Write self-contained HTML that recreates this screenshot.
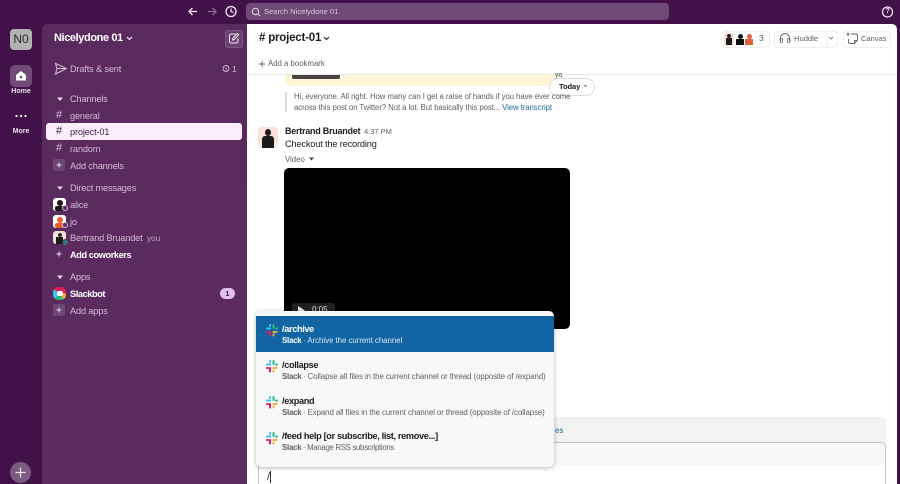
<!DOCTYPE html>
<html><head><meta charset="utf-8"><style>
html,body{margin:0;padding:0;width:900px;height:484px;overflow:hidden}
body{background:#43114a;font-family:"Liberation Sans",sans-serif}
#r{position:absolute;left:0;top:0;width:900px;height:484px;overflow:hidden;background:#43114a}
.a{position:absolute;white-space:nowrap}
.s{color:#d3bcd6;font-size:9.2px;letter-spacing:-.15px;left:70px;line-height:14px}
.b{font-weight:bold;letter-spacing:-.4px;color:#fff}
.h{color:#d3bcd6;font-size:11px;left:56px;line-height:14px}
.t{font-size:9.2px;letter-spacing:-.35px;font-weight:bold;color:#1d1c1d;left:282px;line-height:14px}
.d{font-size:7.8px;color:#616061;left:282px;line-height:12px}
.d b{display:inline-block;width:21px;letter-spacing:-.2px}
svg{position:absolute;overflow:visible}
</style></head><body><div id="r">
<div class="a" style="left:42px;top:24px;width:205px;height:460px;background:linear-gradient(180deg,#5a2a5f,#5c2b5f);border-top-left-radius:5px"></div>
<div class="a" style="left:247px;top:24px;width:650px;height:460px;background:#fff;border-top-right-radius:5px"></div>

<!-- top bar -->
<svg style="left:0;top:0" width="900" height="24" fill="none">
<path d="M197 11.5H189M192.500 8L189 11.500L192.500 15" stroke="#f3eaf4" stroke-width="1.300"/>
<path d="M208 11.500H216M212.500 8L216 11.500L212.500 15" stroke="#8d6b91" stroke-width="1.300"/>
<circle cx="231" cy="11.500" r="5" stroke="#f3eaf4" stroke-width="1.300"/><path d="M231 8.500V11.500L233.500 12.500" stroke="#f3eaf4" stroke-width="1.200"/>
<circle cx="887.500" cy="12" r="5" stroke="#f3eaf4" stroke-width="1.200"/>
</svg>
<div class="a" style="left:246px;top:3px;width:423px;height:17px;background:#6f4a76;border-radius:4px"></div>
<svg style="left:0;top:0" width="300" height="24" fill="none"><circle cx="255.500" cy="11.500" r="3.200" stroke="#e7dbe8"/><path d="M258 14L260 16" stroke="#e7dbe8"/></svg>
<div class="a" style="left:264px;top:5px;font-size:7.600px;line-height:14px;color:#d9c9dc">Search Nicelydone 01</div>
<div class="a" style="left:885.500px;top:6px;font-size:7px;line-height:12px;color:#f3eaf4;font-weight:bold">?</div>

<!-- left rail -->
<div class="a" style="left:10px;top:29px;width:22px;height:21px;background:#b3b1b3;border-radius:4px;color:#2b2a2b;font-size:12px;line-height:21px;text-align:center">N0</div>
<div class="a" style="left:10px;top:65px;width:22px;height:22px;background:#714a78;border-radius:5px"></div>
<svg style="left:10px;top:65px" width="22" height="22"><path d="M11 6L16 10V15.500H6V10Z" fill="#fff"/><circle cx="11" cy="12" r="1.300" fill="#714a78"/></svg>
<div class="a" style="left:0;width:42px;text-align:center;top:86px;font-size:7px;line-height:12px;font-weight:bold;color:#e9dfea">Home</div>
<svg style="left:10px;top:105px" width="22" height="22"><circle cx="6.500" cy="11" r="1.100" fill="#fff"/><circle cx="11" cy="11" r="1.100" fill="#fff"/><circle cx="15.500" cy="11" r="1.100" fill="#fff"/></svg>
<div class="a" style="left:0;width:42px;text-align:center;top:126px;font-size:7px;line-height:12px;font-weight:bold;color:#e9dfea">More</div>
<div class="a" style="left:10px;top:462px;width:21px;height:21px;background:#7b5b81;border-radius:50%"></div>
<svg style="left:10px;top:462px" width="21" height="21"><path d="M10.500 5.500V15.500M5.500 10.500H15.500" stroke="#eadfeb" stroke-width="1.200"/></svg>

<!-- sidebar -->
<div class="a" style="left:54px;top:30px;font-size:11px;letter-spacing:-.4px;line-height:17px;font-weight:bold;color:#fff">Nicelydone 01</div>
<svg style="left:126px;top:36px" width="8" height="6" fill="none"><path d="M1 1L3.500 3.500L6 1" stroke="#fff" stroke-width="1"/></svg>
<div class="a" style="left:225px;top:30px;width:16px;height:16px;background:#6b4170;border-radius:3px;border:.5px solid #7c5682"></div>
<svg style="left:225px;top:30px" width="17" height="17" fill="none"><path d="M11 4H6.500Q4.500 4 4.500 6V11Q4.500 13 6.500 13H11Q13 13 13 11V8M7.500 10L8 8L12.500 3.500L13.800 4.800L9.300 9.500Z" stroke="#efe5f0" stroke-width="1"/></svg>

<svg style="left:54px;top:62px" width="14" height="14" fill="none"><path d="M1.500 1.500L12.500 6.500L1.500 12L3 6.500ZM3 6.500H12.500" stroke="#d3bcd6" stroke-width="1"/></svg>
<div class="a s" style="top:62px">Drafts &amp; sent</div>
<svg style="left:222px;top:64px" width="8" height="9" fill="none"><circle cx="4" cy="4.500" r="3" stroke="#d3bcd6" stroke-width=".9"/><path d="M4 3V5L5 5.500" stroke="#d3bcd6" stroke-width=".8"/></svg>
<div class="a" style="left:232px;top:62px;font-size:8.500px;line-height:14px;color:#d3bcd6">1</div>

<svg style="left:57px;top:97px" width="8" height="5"><path d="M0 .5H6L3 4Z" fill="#e7dbe8"/></svg>
<div class="a s" style="top:92px">Channels</div>
<div class="a h" style="top:108px">#</div><div class="a s" style="top:109px">general</div>
<div class="a" style="left:46px;top:123px;width:196px;height:17px;background:#f9edfa;border-radius:3px"></div>
<div class="a h" style="top:124px;color:#3d1d42">#</div><div class="a s" style="top:125px;color:#3d1d42">project-01</div>
<div class="a h" style="top:141px">#</div><div class="a s" style="top:142px">random</div>
<div class="a" style="left:53px;top:159px;width:12px;height:12px;background:#6e4674;border-radius:2px"></div>
<svg style="left:53px;top:159px" width="12" height="12"><path d="M6 3.500V8.500M3.500 6H8.500" stroke="#e7dbe8"/></svg>
<div class="a s" style="top:159px">Add channels</div>

<svg style="left:57px;top:186px" width="8" height="5"><path d="M0 .5H6L3 4Z" fill="#e7dbe8"/></svg>
<div class="a s" style="top:181px">Direct messages</div>
<!-- alice -->
<div class="a" style="left:53px;top:198px;width:13px;height:12.500px;background:#fff;border-radius:3px;overflow:hidden"><div class="a" style="left:3.500px;top:1.500px;width:6px;height:6px;border-radius:50%;background:#1a1a1a"></div><div class="a" style="left:1.500px;top:7.500px;width:10px;height:5px;background:#1a1a1a;border-radius:2px"></div></div>
<div class="a" style="left:62px;top:205px;width:4px;height:4px;border-radius:50%;border:1px solid #d3bcd6;background:#5a2a5f"></div>
<div class="a s" style="top:198px">alice</div>
<!-- jo -->
<div class="a" style="left:53px;top:215px;width:13px;height:12.500px;background:#fff;border-radius:3px;overflow:hidden"><div class="a" style="left:3.500px;top:1.500px;width:6px;height:6px;border-radius:50%;background:#e8602c"></div><div class="a" style="left:1.500px;top:7.500px;width:10px;height:5px;background:#e8602c;border-radius:2px"></div></div>
<div class="a" style="left:62px;top:222px;width:4px;height:4px;border-radius:50%;border:1px solid #d3bcd6;background:#5a2a5f"></div>
<div class="a s" style="top:215px">jo</div>
<!-- bertrand -->
<div class="a" style="left:53px;top:231px;width:13px;height:13px;background:#f3e2da;border-radius:3px;overflow:hidden"><div class="a" style="left:4.500px;top:1.500px;width:4px;height:4px;border-radius:50%;background:#3a2a24"></div><div class="a" style="left:3px;top:5.500px;width:7px;height:8px;background:#1d1c1d"></div></div>
<div class="a" style="left:61.500px;top:238.500px;width:5px;height:5px;border-radius:50%;background:#2d7a78;border:.5px solid #5a2a5f"></div>
<div class="a s" style="top:231px">Bertrand Bruandet <span style="margin-left:2px;font-size:8.500px;color:#b79fbb">you</span></div>
<svg style="left:53px;top:248px" width="12" height="12"><path d="M6 3.500V8.500M3.500 6H8.500" stroke="#f0d8f2"/></svg>
<div class="a s b" style="top:248px;color:#fff">Add coworkers</div>

<svg style="left:57px;top:275px" width="8" height="5"><path d="M0 .5H6L3 4Z" fill="#e7dbe8"/></svg>
<div class="a s" style="top:270px">Apps</div>
<div class="a" style="left:53px;top:287px;width:13px;height:13px;border-radius:5px;background:conic-gradient(#e01e5a 0 25%,#ecb22e 25% 40%,#2eb67d 40% 62%,#36c5f0 62% 85%,#e01e5a 85%)"></div>
<div class="a" style="left:56.500px;top:291px;width:6px;height:5px;background:#fff;border-radius:2px"></div>
<div class="a s b" style="top:287px;color:#fff">Slackbot</div>
<div class="a" style="left:220px;top:288px;width:15px;height:11px;border-radius:6px;background:#e3bff0;color:#3f1a44;font-size:7.500px;font-weight:bold;line-height:11px;text-align:center">1</div>
<div class="a" style="left:53px;top:304px;width:12px;height:12px;background:#6e4674;border-radius:2px"></div>
<svg style="left:53px;top:304px" width="12" height="12"><path d="M6 3.500V8.500M3.500 6H8.500" stroke="#e7dbe8"/></svg>
<div class="a s" style="top:304px">Add apps</div>

<!-- channel header -->
<div class="a" style="left:259px;top:30px;font-size:11.500px;letter-spacing:-.2px;line-height:17px;font-weight:bold;color:#1d1c1d"># project-01</div>
<svg style="left:323px;top:36px" width="8" height="6" fill="none"><path d="M1 1L3.500 3.500L6 1" stroke="#1d1c1d"/></svg>
<div class="a" style="left:721px;top:31px;width:47px;height:15px;border:1px solid #f0eff0;border-radius:4px"></div>
<div class="a" style="left:724px;top:33px;width:10px;height:12px;background:#f3dfd4;border-radius:2px;overflow:hidden"><div class="a" style="left:3px;top:1px;width:4px;height:4px;border-radius:50%;background:#2a1e1a"></div><div class="a" style="left:2px;top:5px;width:6px;height:7px;background:#1d1c1d"></div></div>
<div class="a" style="left:735px;top:33px;width:10px;height:12px;overflow:hidden"><div class="a" style="left:2.500px;top:1px;width:5px;height:5px;border-radius:50%;background:#111"></div><div class="a" style="left:1px;top:6px;width:8px;height:6px;background:#111"></div></div>
<div class="a" style="left:744px;top:33px;width:10px;height:12px;overflow:hidden"><div class="a" style="left:2.500px;top:1px;width:5px;height:5px;border-radius:50%;background:#e2603a"></div><div class="a" style="left:1px;top:6px;width:8px;height:6px;background:#e2603a"></div></div>
<div class="a" style="left:759px;top:32px;font-size:8.500px;line-height:13px;color:#616061">3</div>
<div class="a" style="left:774px;top:31px;width:51px;height:15px;border:1px solid #f0eff0;border-radius:4px 0 0 4px"></div>
<div class="a" style="left:825px;top:31px;width:12px;height:15px;border:1px solid #f0eff0;border-left:0;border-radius:0 4px 4px 0"></div>
<svg style="left:779px;top:32px" width="12" height="12" fill="none"><path d="M1.500 9V6A4.500 4.500 0 0 1 10.500 6V9" stroke="#616061"/><rect x="1" y="6.500" width="2.500" height="4" rx="1" stroke="#616061" stroke-width=".8"/><rect x="8.500" y="6.500" width="2.500" height="4" rx="1" stroke="#616061" stroke-width=".8"/></svg>
<div class="a" style="left:794px;top:32px;font-size:7.600px;line-height:13px;color:#616061">Huddle</div>
<svg style="left:828px;top:36px" width="7" height="5" fill="none"><path d="M1 1L3 3L5 1" stroke="#616061" stroke-width=".8"/></svg>
<div class="a" style="left:843px;top:31px;width:46px;height:15px;border:1px solid #f0eff0;border-radius:4px"></div>
<svg style="left:846px;top:31px" width="13" height="14" fill="none"><path d="M5 3H10Q11.500 3 11.500 4.500V9L8.500 12.500H4Q2.500 12.500 2.500 11V8M8.500 12.500V9.500H11.500M2 1.500V5M.5 3.200H3.800" stroke="#616061" stroke-width=".9"/></svg>
<div class="a" style="left:861px;top:32px;font-size:7.500px;line-height:13px;color:#616061">Canvas</div>

<svg style="left:258px;top:60px" width="8" height="8"><path d="M4 1V7M1 4H7" stroke="#616061" stroke-width=".9"/></svg>
<div class="a" style="left:268px;top:57px;font-size:7.800px;line-height:13px;color:#616061">Add a bookmark</div>
<div class="a" style="left:247px;top:74px;width:650px;height:1px;background:#e9e8e9"></div>

<!-- messages -->
<div class="a" style="left:285px;top:75px;width:270px;height:11px;background:#fdf5d7;border-radius:0 0 5px 5px"></div>
<div class="a" style="left:292px;top:75px;width:48px;height:4px;background:#4a4542;border-radius:0 0 2px 2px"></div>
<div class="a" style="left:555px;top:71px;font-size:7px;line-height:9px;color:#444">yo</div>
<div class="a" style="left:549px;top:78px;width:44px;height:16px;background:#fff;border:1px solid #dddcdd;border-radius:9px"></div>
<div class="a" style="left:559px;top:80px;font-size:7.600px;letter-spacing:-.1px;line-height:13px;font-weight:bold;color:#1d1c1d">Today</div>
<svg style="left:583px;top:84px" width="6" height="5" fill="none"><path d="M1 1L2.500 2.500L4 1" stroke="#616061" stroke-width=".8"/></svg>
<div class="a" style="left:285px;top:92px;width:2px;height:20px;background:#dddcdd"></div>
<div class="a" style="left:294px;top:91px;font-size:7.800px;letter-spacing:-.08px;line-height:11px;color:#616061">Hi, everyone. All right. How many can I get a raise of hands if you have ever come<br>across this post on Twitter? Not a lot. But basically this post... <span style="color:#1d6a93">View transcript</span></div>

<div class="a" style="left:258px;top:127px;width:20px;height:21px;background:#f9e3d9;border-radius:4px;overflow:hidden"><div class="a" style="left:6.500px;top:2px;width:6px;height:7px;border-radius:50%;background:#231a16"></div><div class="a" style="left:4px;top:9px;width:12px;height:12px;background:#1d1c1d;border-radius:3px 3px 0 0"></div></div>
<div class="a" style="left:285px;top:125px;font-size:9px;letter-spacing:-.25px;line-height:13px;font-weight:bold;color:#1d1c1d">Bertrand Bruandet</div>
<div class="a" style="left:364px;top:126px;font-size:7.500px;line-height:12px;color:#616061">4:37 PM</div>
<div class="a" style="left:285px;top:137px;font-size:9.200px;letter-spacing:-.15px;line-height:14px;color:#1d1c1d">Checkout the recording</div>
<div class="a" style="left:285px;top:153px;font-size:7.800px;line-height:13px;color:#616061">Video</div>
<svg style="left:309px;top:157px" width="6" height="5"><path d="M0 .5H5L2.500 3.500Z" fill="#444"/></svg>
<div class="a" style="left:284px;top:168px;width:286px;height:161px;background:#000;border-radius:5px"></div>
<div class="a" style="left:292px;top:303px;width:43px;height:12px;background:#222;border-radius:3px"></div>
<svg style="left:297px;top:306px" width="10" height="8"><path d="M1 0L8 4.500L1 9Z" fill="#e6e6e6"/></svg>
<div class="a" style="left:312px;top:305px;font-size:8px;line-height:10px;color:#ddd">0:05</div>

<!-- composer -->
<div class="a" style="left:258px;top:417px;width:628px;height:60px;background:#f2f2f2;border-radius:5px 5px 0 0"></div>
<div class="a" style="left:555px;top:424px;font-size:7.800px;line-height:13px;color:#1d6a93">es</div>
<div class="a" style="left:258px;top:442px;width:626px;height:50px;background:#fff;border:1px solid #c4c3c4;border-radius:5px"></div>
<div class="a" style="left:259px;top:443px;width:626px;height:22px;background:#f7f7f7;border-radius:5px 5px 0 0"></div>
<div class="a" style="left:267px;top:470px;font-size:11px;line-height:14px;color:#333">/</div>
<div class="a" style="left:270px;top:471px;width:1px;height:12px;background:#333"></div>

<!-- popup -->
<div class="a" style="left:256px;top:311px;width:298px;height:156px;background:#f8f8f8;border-radius:5px;box-shadow:0 1px 5px rgba(0,0,0,.28)"></div>
<div class="a" style="left:256px;top:316px;width:298px;height:36px;background:#1264a3"></div>

<svg style="left:265px;top:323px" width="14" height="14"><rect x="1" y="4.500" width="5" height="2" rx="1" fill="#36c5f0"/><rect x="4" y="1" width="2" height="3" rx="1" fill="#36c5f0"/><rect x="7.500" y="1" width="2" height="5" rx="1" fill="#2eb67d"/><rect x="10" y="4.500" width="3" height="2" rx="1" fill="#2eb67d"/><rect x="7.500" y="8" width="5" height="2" rx="1" fill="#ecb22e"/><rect x="7.500" y="10.500" width="2" height="3" rx="1" fill="#ecb22e"/><rect x="4" y="8" width="2" height="5.500" rx="1" fill="#e01e5a"/><rect x="1" y="8" width="3" height="2" rx="1" fill="#e01e5a"/></svg>
<div class="a t" style="top:322px;color:#fff">/archive</div>
<div class="a d" style="top:335px;color:#d5e6f2"><b style="color:#fff">Slack</b>· Archive the current channel</div>

<svg style="left:265px;top:359px" width="14" height="14"><rect x="1" y="4.500" width="5" height="2" rx="1" fill="#36c5f0"/><rect x="4" y="1" width="2" height="3" rx="1" fill="#36c5f0"/><rect x="7.500" y="1" width="2" height="5" rx="1" fill="#2eb67d"/><rect x="10" y="4.500" width="3" height="2" rx="1" fill="#2eb67d"/><rect x="7.500" y="8" width="5" height="2" rx="1" fill="#ecb22e"/><rect x="7.500" y="10.500" width="2" height="3" rx="1" fill="#ecb22e"/><rect x="4" y="8" width="2" height="5.500" rx="1" fill="#e01e5a"/><rect x="1" y="8" width="3" height="2" rx="1" fill="#e01e5a"/></svg>
<div class="a t" style="top:358px">/collapse</div>
<div class="a d" style="top:371px;letter-spacing:-.06px"><b>Slack</b>· Collapse all files in the current channel or thread (opposite of /expand)</div>

<svg style="left:265px;top:395px" width="14" height="14"><rect x="1" y="4.500" width="5" height="2" rx="1" fill="#36c5f0"/><rect x="4" y="1" width="2" height="3" rx="1" fill="#36c5f0"/><rect x="7.500" y="1" width="2" height="5" rx="1" fill="#2eb67d"/><rect x="10" y="4.500" width="3" height="2" rx="1" fill="#2eb67d"/><rect x="7.500" y="8" width="5" height="2" rx="1" fill="#ecb22e"/><rect x="7.500" y="10.500" width="2" height="3" rx="1" fill="#ecb22e"/><rect x="4" y="8" width="2" height="5.500" rx="1" fill="#e01e5a"/><rect x="1" y="8" width="3" height="2" rx="1" fill="#e01e5a"/></svg>
<div class="a t" style="top:394px">/expand</div>
<div class="a d" style="top:407px;letter-spacing:-.06px"><b>Slack</b>· Expand all files in the current channel or thread (opposite of /collapse)</div>

<svg style="left:265px;top:431px" width="14" height="14"><rect x="1" y="4.500" width="5" height="2" rx="1" fill="#36c5f0"/><rect x="4" y="1" width="2" height="3" rx="1" fill="#36c5f0"/><rect x="7.500" y="1" width="2" height="5" rx="1" fill="#2eb67d"/><rect x="10" y="4.500" width="3" height="2" rx="1" fill="#2eb67d"/><rect x="7.500" y="8" width="5" height="2" rx="1" fill="#ecb22e"/><rect x="7.500" y="10.500" width="2" height="3" rx="1" fill="#ecb22e"/><rect x="4" y="8" width="2" height="5.500" rx="1" fill="#e01e5a"/><rect x="1" y="8" width="3" height="2" rx="1" fill="#e01e5a"/></svg>
<div class="a t" style="top:429px">/feed help [or subscribe, list, remove...]</div>
<div class="a d" style="top:442px;letter-spacing:-.3px"><b>Slack</b>· Manage RSS subscriptions</div>
</div></body></html>
